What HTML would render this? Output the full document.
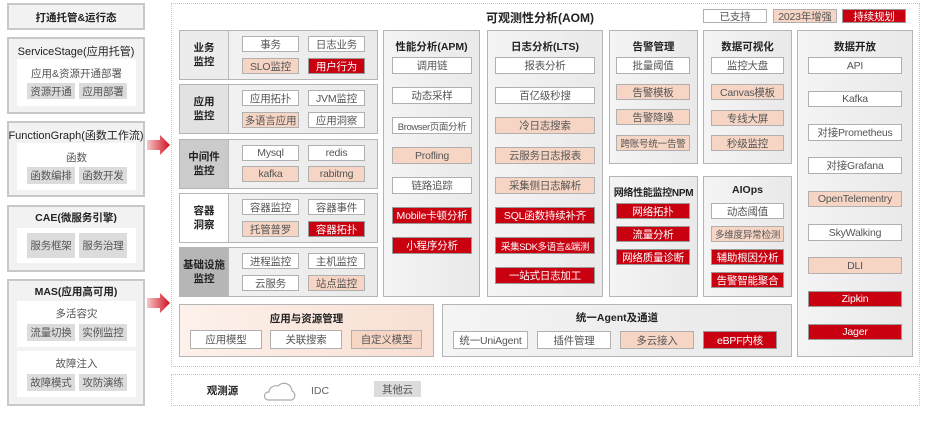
<!DOCTYPE html><html><head><meta charset="utf-8"><style>
body{margin:0;width:928px;height:421px;background:#fff;position:relative;overflow:hidden;font-family:"Liberation Sans","Noto Sans CJK SC",sans-serif;color:#333}
div{position:absolute;box-sizing:border-box}
.b{border:1px solid #b0b0b0;display:flex;align-items:center;justify-content:center;font-size:10.5px;white-space:nowrap;color:#555;letter-spacing:-0.2px}
.w{background:#fff}.p{background:#f6d5c5}.r{background:#c8000f;color:#fff;border-color:#999}
.g{background:#dcdcdc;border:none}
.box{border:1px solid #b5b5b5;background:linear-gradient(90deg,#f4f4f4,#e9e9e9)}
.lb{border:2px solid #c8c8c8;background:#f2f2f2}
.t{font-weight:bold;font-size:10.5px;text-align:center;color:#222;white-space:nowrap}
.s{font-size:10.5px;text-align:center;color:#555;white-space:nowrap}
.in{background:#fff}
.lab{display:flex;align-items:center;justify-content:center;text-align:center;font-weight:bold;font-size:10.5px;line-height:14px;color:#222;border-right:1px solid #bbb}
.dash{border:1.5px dotted #c4c4c4}
</style></head><body>
<div class="lb" style="left:7px;top:3px;width:138px;height:27px"></div><div class="t" style="left:7px;top:10px;width:138px">打通托管&amp;运行态</div>
<div class="lb" style="left:7px;top:37px;width:138px;height:77px"></div><div class="t" style="left:7px;top:43px;width:138px;font-weight:normal;color:#222;font-size:11px">ServiceStage(应用托管)</div>
<div class="in" style="left:17px;top:59px;width:119px;height:47px"></div><div class="s" style="left:17px;top:66px;width:119px">应用&amp;资源开通部署</div>
<div class="b g" style="left:27px;top:83px;width:48px;height:16px">资源开通</div><div class="b g" style="left:79px;top:83px;width:48px;height:16px">应用部署</div>
<div class="lb" style="left:7px;top:121px;width:138px;height:76px"></div><div class="t" style="left:7px;top:127px;width:138px;font-weight:normal;color:#222;font-size:11px">FunctionGraph(函数工作流)</div>
<div class="in" style="left:17px;top:143px;width:119px;height:47px"></div><div class="s" style="left:17px;top:150px;width:119px">函数</div>
<div class="b g" style="left:27px;top:167px;width:48px;height:17px">函数编排</div><div class="b g" style="left:79px;top:167px;width:48px;height:17px">函数开发</div>
<div class="lb" style="left:7px;top:205px;width:138px;height:67px"></div><div class="t" style="left:7px;top:210px;width:138px">CAE(微服务引擎)</div>
<div class="in" style="left:17px;top:228px;width:119px;height:35px"></div>
<div class="b g" style="left:27px;top:233px;width:48px;height:25px">服务框架</div><div class="b g" style="left:79px;top:233px;width:48px;height:25px">服务治理</div>
<div class="lb" style="left:7px;top:279px;width:138px;height:127px"></div><div class="t" style="left:7px;top:284px;width:138px">MAS(应用高可用)</div>
<div class="in" style="left:17px;top:301px;width:119px;height:46px"></div><div class="s" style="left:17px;top:306px;width:119px">多活容灾</div>
<div class="b g" style="left:27px;top:324px;width:48px;height:17px">流量切换</div><div class="b g" style="left:79px;top:324px;width:48px;height:17px">实例监控</div>
<div class="in" style="left:17px;top:351px;width:119px;height:46px"></div><div class="s" style="left:17px;top:356px;width:119px">故障注入</div>
<div class="b g" style="left:27px;top:374px;width:48px;height:17px">故障模式</div><div class="b g" style="left:79px;top:374px;width:48px;height:17px">攻防演练</div>
<svg style="position:absolute;left:147px;top:135px" width="24" height="20"><defs><linearGradient id="a"><stop offset="0" stop-color="#f5c8c8"/><stop offset="1" stop-color="#d01020"/></linearGradient></defs><path d="M0 5H13V0L23 10L13 20V15H0Z" fill="url(#a)"/></svg>
<svg style="position:absolute;left:147px;top:293px" width="24" height="20"><path d="M0 5H13V0L23 10L13 20V15H0Z" fill="url(#a)"/></svg>
<div class="dash" style="left:171px;top:3px;width:749px;height:364px"></div>
<div class="t" style="left:440px;top:9px;width:200px;font-size:12px">可观测性分析(AOM)</div>
<div class="b w" style="left:703px;top:9px;width:64px;height:14px">已支持</div>
<div class="b p" style="left:773px;top:9px;width:64px;height:14px">2023年增强</div>
<div class="b r" style="left:842px;top:9px;width:64px;height:14px">持续规划</div>
<div class="box" style="left:179px;top:30px;width:199px;height:50px"></div><div class="lab" style="left:180px;top:31px;width:49px;height:48px;background:#ececec">业务<br>监控</div>
<div class="b w" style="left:242px;top:36px;width:57px;height:16px">事务</div><div class="b w" style="left:308px;top:36px;width:57px;height:16px">日志业务</div>
<div class="b p" style="left:242px;top:58px;width:57px;height:16px">SLO监控</div><div class="b r" style="left:308px;top:58px;width:57px;height:16px">用户行为</div>
<div class="box" style="left:179px;top:84px;width:199px;height:50px"></div><div class="lab" style="left:180px;top:85px;width:49px;height:48px;background:#e2e2e2">应用<br>监控</div>
<div class="b w" style="left:242px;top:90px;width:57px;height:16px">应用拓扑</div><div class="b w" style="left:308px;top:90px;width:57px;height:16px">JVM监控</div>
<div class="b p" style="left:242px;top:112px;width:57px;height:16px">多语言应用</div><div class="b w" style="left:308px;top:112px;width:57px;height:16px">应用洞察</div>
<div class="box" style="left:179px;top:139px;width:199px;height:50px"></div><div class="lab" style="left:180px;top:140px;width:49px;height:48px;background:#cbcbcb">中间件<br>监控</div>
<div class="b w" style="left:242px;top:145px;width:57px;height:16px">Mysql</div><div class="b w" style="left:308px;top:145px;width:57px;height:16px">redis</div>
<div class="b p" style="left:242px;top:166px;width:57px;height:16px">kafka</div><div class="b p" style="left:308px;top:166px;width:57px;height:16px">rabitmg</div>
<div class="box" style="left:179px;top:193px;width:199px;height:50px"></div><div class="lab" style="left:180px;top:194px;width:49px;height:48px;background:#fff">容器<br>洞察</div>
<div class="b w" style="left:242px;top:199px;width:57px;height:16px">容器监控</div><div class="b w" style="left:308px;top:199px;width:57px;height:16px">容器事件</div>
<div class="b p" style="left:242px;top:221px;width:57px;height:16px">托管普罗</div><div class="b r" style="left:308px;top:221px;width:57px;height:16px">容器拓扑</div>
<div class="box" style="left:179px;top:247px;width:199px;height:50px"></div><div class="lab" style="left:180px;top:248px;width:49px;height:48px;background:#b6b6b6">基础设施<br>监控</div>
<div class="b w" style="left:242px;top:253px;width:57px;height:16px">进程监控</div><div class="b w" style="left:308px;top:253px;width:57px;height:16px">主机监控</div>
<div class="b w" style="left:242px;top:275px;width:57px;height:16px">云服务</div><div class="b p" style="left:308px;top:275px;width:57px;height:16px">站点监控</div>
<div class="box" style="left:383px;top:30px;width:97px;height:267px"></div><div class="t" style="left:383px;top:39px;width:97px">性能分析(APM)</div>
<div class="b w" style="left:392px;top:57px;width:80px;height:17px">调用链</div>
<div class="b w" style="left:392px;top:87px;width:80px;height:17px">动态采样</div>
<div class="b w" style="left:392px;top:117px;width:80px;height:17px;font-size:9.5px;letter-spacing:-0.4px">Browser页面分析</div>
<div class="b p" style="left:392px;top:147px;width:80px;height:17px">Profling</div>
<div class="b w" style="left:392px;top:177px;width:80px;height:17px">链路追踪</div>
<div class="b r" style="left:392px;top:207px;width:80px;height:17px">Mobile卡顿分析</div>
<div class="b r" style="left:392px;top:237px;width:80px;height:17px">小程序分析</div>
<div class="box" style="left:487px;top:30px;width:116px;height:267px"></div><div class="t" style="left:487px;top:39px;width:116px">日志分析(LTS)</div>
<div class="b w" style="left:495px;top:57px;width:100px;height:17px">报表分析</div>
<div class="b w" style="left:495px;top:87px;width:100px;height:17px">百亿级秒搜</div>
<div class="b p" style="left:495px;top:117px;width:100px;height:17px">冷日志搜索</div>
<div class="b p" style="left:495px;top:147px;width:100px;height:17px">云服务日志报表</div>
<div class="b p" style="left:495px;top:177px;width:100px;height:17px">采集侧日志解析</div>
<div class="b r" style="left:495px;top:207px;width:100px;height:17px">SQL函数持续补齐</div>
<div class="b r" style="left:495px;top:237px;width:100px;height:17px;font-size:9.5px;letter-spacing:-0.4px">采集SDK多语言&amp;端测</div>
<div class="b r" style="left:495px;top:267px;width:100px;height:17px">一站式日志加工</div>
<div class="box" style="left:609px;top:30px;width:89px;height:134px"></div><div class="t" style="left:609px;top:39px;width:89px">告警管理</div>
<div class="b w" style="left:616px;top:57px;width:74px;height:17px">批量阈值</div>
<div class="b p" style="left:616px;top:84px;width:74px;height:16px">告警模板</div>
<div class="b p" style="left:616px;top:109px;width:74px;height:16px">告警降噪</div>
<div class="b p" style="left:616px;top:135px;width:74px;height:16px;font-size:9.5px">跨账号统一告警</div>
<div class="box" style="left:703px;top:30px;width:89px;height:134px"></div><div class="t" style="left:703px;top:39px;width:89px">数据可视化</div>
<div class="b w" style="left:711px;top:57px;width:73px;height:17px">监控大盘</div>
<div class="b p" style="left:711px;top:84px;width:73px;height:16px">Canvas模板</div>
<div class="b p" style="left:711px;top:110px;width:73px;height:16px">专线大屏</div>
<div class="b p" style="left:711px;top:135px;width:73px;height:16px">秒级监控</div>
<div class="box" style="left:609px;top:176px;width:89px;height:121px"></div><div class="t" style="left:609px;top:184px;width:89px;font-size:10px;letter-spacing:-0.3px">网络性能监控NPM</div>
<div class="b r" style="left:616px;top:203px;width:74px;height:16px">网络拓扑</div>
<div class="b r" style="left:616px;top:226px;width:74px;height:16px">流量分析</div>
<div class="b r" style="left:616px;top:249px;width:74px;height:16px">网络质量诊断</div>
<div class="box" style="left:703px;top:176px;width:89px;height:121px"></div><div class="t" style="left:703px;top:184px;width:89px">AIOps</div>
<div class="b w" style="left:711px;top:203px;width:73px;height:16px">动态阈值</div>
<div class="b p" style="left:711px;top:226px;width:73px;height:16px;font-size:9.5px">多维度异常检测</div>
<div class="b r" style="left:711px;top:249px;width:73px;height:16px">辅助根因分析</div>
<div class="b r" style="left:711px;top:272px;width:73px;height:16px">告警智能聚合</div>
<div class="box" style="left:797px;top:30px;width:116px;height:327px"></div><div class="t" style="left:797px;top:39px;width:116px">数据开放</div>
<div class="b w" style="left:808px;top:57px;width:94px;height:17px">API</div>
<div class="b w" style="left:808px;top:91px;width:94px;height:16px">Kafka</div>
<div class="b w" style="left:808px;top:124px;width:94px;height:17px">对接Prometheus</div>
<div class="b w" style="left:808px;top:157px;width:94px;height:17px">对接Grafana</div>
<div class="b p" style="left:808px;top:191px;width:94px;height:16px">OpenTelementry</div>
<div class="b w" style="left:808px;top:224px;width:94px;height:17px">SkyWalking</div>
<div class="b p" style="left:808px;top:257px;width:94px;height:17px">DLI</div>
<div class="b r" style="left:808px;top:291px;width:94px;height:16px">Zipkin</div>
<div class="b r" style="left:808px;top:324px;width:94px;height:16px">Jager</div>
<div class="box" style="left:179px;top:304px;width:255px;height:53px;background:linear-gradient(90deg,#fdf1eb,#f8dfd3)"></div>
<div class="t" style="left:179px;top:311px;width:255px">应用与资源管理</div>
<div class="b w" style="left:190px;top:330px;width:72px;height:19px">应用模型</div>
<div class="b w" style="left:270px;top:330px;width:72px;height:19px">关联搜索</div>
<div class="b p" style="left:351px;top:330px;width:71px;height:19px">自定义模型</div>
<div class="box" style="left:442px;top:304px;width:350px;height:53px"></div>
<div class="t" style="left:442px;top:310px;width:350px">统一Agent及通道</div>
<div class="b w" style="left:453px;top:331px;width:75px;height:18px">统一UniAgent</div>
<div class="b w" style="left:537px;top:331px;width:74px;height:18px">插件管理</div>
<div class="b p" style="left:620px;top:331px;width:74px;height:18px">多云接入</div>
<div class="b r" style="left:703px;top:331px;width:74px;height:18px">eBPF内核</div>
<div class="dash" style="left:171px;top:374px;width:749px;height:32px"></div>
<div class="t" style="left:200px;top:383px;width:45px">观测源</div>
<svg style="position:absolute;left:262px;top:380px" width="36" height="22"><path d="M6 20H30A5 5 0 0 0 30 11A8 8 0 0 0 16 6A7 7 0 0 0 7 12A4 4 0 0 0 6 20Z" fill="#fff" stroke="#aaa" stroke-width="1.2"/></svg>
<div class="s" style="left:308px;top:384px;width:24px;color:#666;line-height:14px">IDC</div>
<div class="b g" style="left:374px;top:381px;width:47px;height:16px">其他云</div>
</body></html>
